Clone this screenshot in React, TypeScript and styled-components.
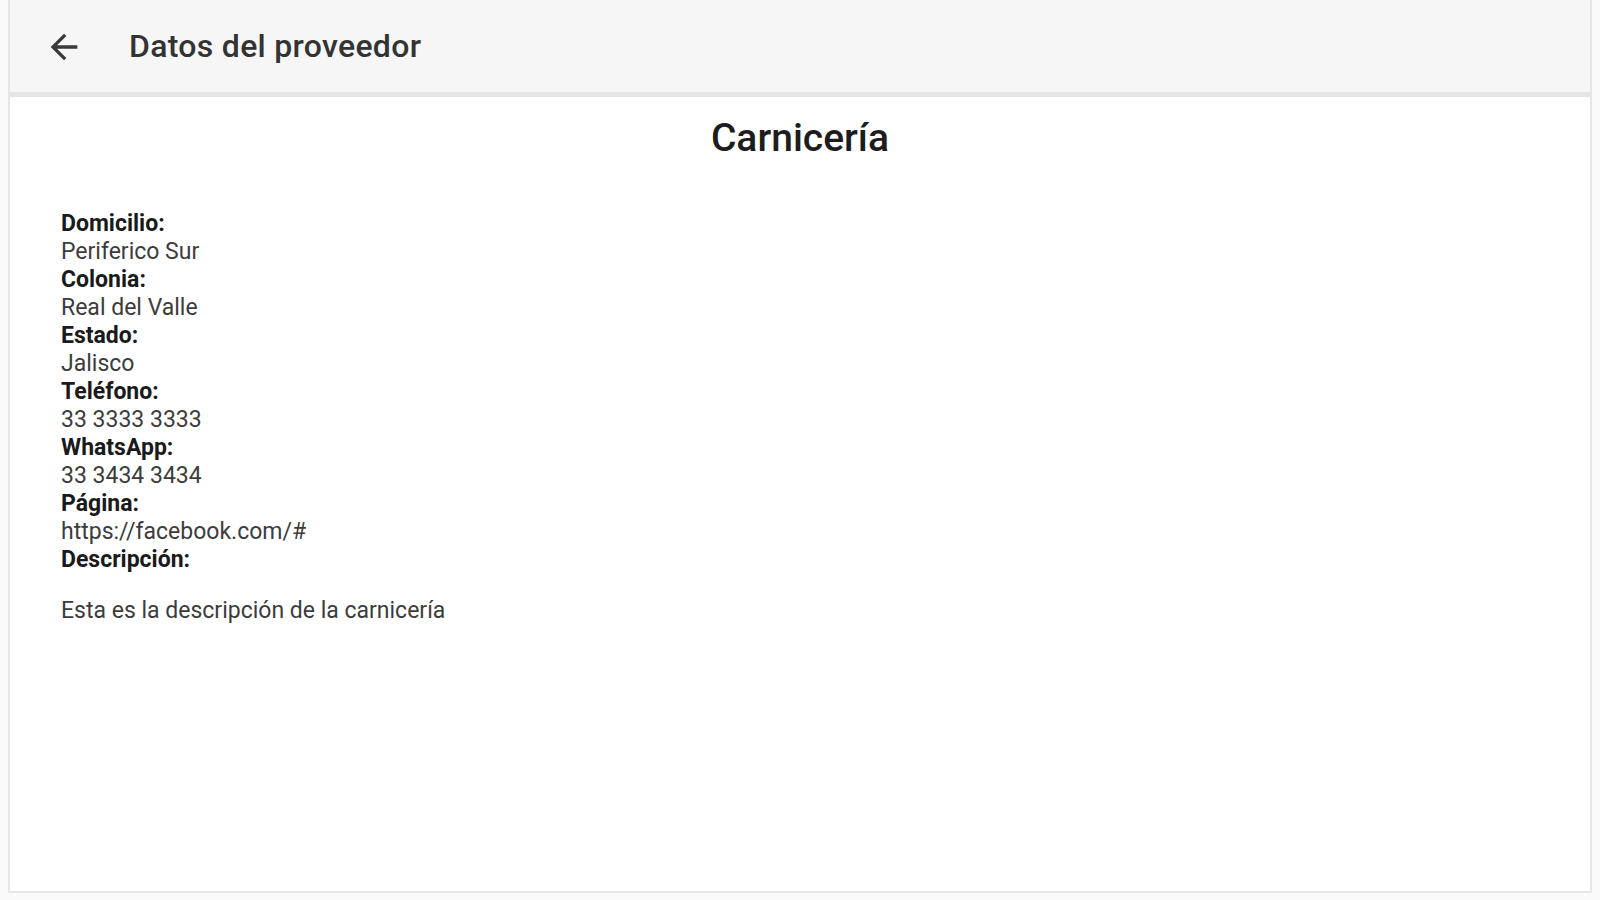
import React from "react";
import styled, { createGlobalStyle } from "styled-components";

const GlobalStyle = createGlobalStyle`
  html, body {
    margin: 0;
    padding: 0;
    background: #fafafa;
    font-family: Roboto, "Liberation Sans", Arial, sans-serif;
  }
`;

const Frame = styled.div`
  box-sizing: border-box;
  margin: 0 8px;
  height: 893px;
  background: #fff;
  border: 2px solid #e6e6e6;
  border-top: none;
  display: flex;
  flex-direction: column;
`;

const TopBar = styled.header`
  display: flex;
  align-items: center;
  height: 92px;
  background: #f6f6f6;
  border-bottom: 5px solid #e5e5e5;
  padding: 0 0 0 34px;
`;

const BackButton = styled.button`
  display: flex;
  align-items: center;
  justify-content: center;
  width: 40px;
  height: 40px;
  padding: 0;
  margin: 1px 45px 0 0;
  border: none;
  background: transparent;
  color: #3a3a3a;
  cursor: pointer;
`;

const BarTitle = styled.h1`
  margin: 0;
  font-size: 32px;
  font-weight: 500;
  color: #333;
  letter-spacing: 0.3px;
`;

const Content = styled.main`
  padding: 19px 51px 0;
`;

const ShopName = styled.h2`
  margin: 0;
  text-align: center;
  font-size: 39px;
  line-height: 44px;
  font-weight: 500;
  color: #1d1d1d;
`;

const Details = styled.dl`
  margin: 50px 0 0;
  font-size: 23px;
  line-height: 28px;
`;

const Label = styled.dt`
  font-weight: 700;
  color: #1a1a1a;
`;

const Value = styled.dd`
  margin: 0;
  color: #3c3c3c;
`;

const Description = styled.p`
  margin: 23px 0 0;
  font-size: 23px;
  line-height: 28px;
  color: #3c3c3c;
`;

const fields = [
  { label: "Domicilio:", value: "Periferico Sur" },
  { label: "Colonia:", value: "Real del Valle" },
  { label: "Estado:", value: "Jalisco" },
  { label: "Teléfono:", value: "33 3333 3333" },
  { label: "WhatsApp:", value: "33 3434 3434" },
  { label: "Página:", value: "https://facebook.com/#" },
];

function ArrowBack() {
  return (
    <svg width="40" height="40" viewBox="0 0 24 24" fill="currentColor">
      <path d="M20 11H7.83l5.59-5.59L12 4l-8 8 8 8 1.41-1.41L7.83 13H20v-2z" />
    </svg>
  );
}

export default function App() {
  return (
    <>
      <GlobalStyle />
      <Frame>
        <TopBar>
          <BackButton aria-label="Regresar">
            <ArrowBack />
          </BackButton>
          <BarTitle>Datos del proveedor</BarTitle>
        </TopBar>
        <Content>
          <ShopName>Carnicería</ShopName>
          <Details>
            {fields.map((f) => (
              <React.Fragment key={f.label}>
                <Label>{f.label}</Label>
                <Value>{f.value}</Value>
              </React.Fragment>
            ))}
            <Label>Descripción:</Label>
          </Details>
          <Description>Esta es la descripción de la carnicería</Description>
        </Content>
      </Frame>
    </>
  );
}
